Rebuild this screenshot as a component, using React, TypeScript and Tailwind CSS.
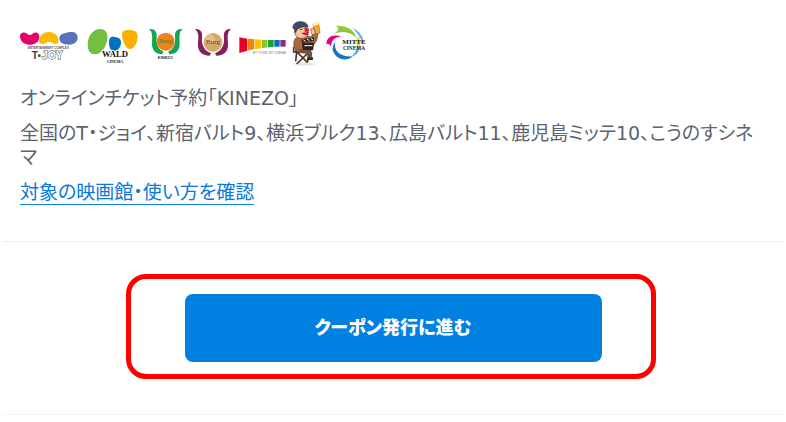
function TJoyLogo() {
  return (
    <svg role="img" aria-label="T-JOY" viewBox="0 0 186 138" className="h-[46px] w-[62px]">
      <path d="M0 49C0 38 12 34 21 41C27 47 32 46 38 41C46 34 58 38 58 50C58 66 44 74 28 74C12 74 0 64 0 49Z" fill="#e5006a" />
      <path d="M58 62C60 46 70 36 87 36C104 36 115 48 116 62C116 72 104 74 98 69C91 64 84 64 78 69C70 74 58 72 58 62Z" fill="#fbb800" />
      <path d="M118 55C118 42 132 40 146 37C162 34 173 40 173 53C173 67 160 74 145 74C129 74 118 68 118 55Z" fill="#5874b9" />
      <text x="85" y="86" textAnchor="middle" fontSize="9" fontWeight="700" fill="#555">ENTERTAINMENT COMPLEX</text>
      <text x="35" y="118" fontSize="31" fontWeight="700" fill="#444">T</text>
      <circle cx="58" cy="107" r="4" fill="#444" />
      <text x="66" y="118" fontSize="31" fontWeight="700" fill="#fff" stroke="#777" strokeWidth="4" paintOrder="stroke">JOY</text>
    </svg>
  )
}

function WaldLogo() {
  return (
    <svg role="img" aria-label="WALD CINEMA" viewBox="0 0 168 138" className="h-[46px] w-[56px]">
      <path d="M5 73C5 49 20 27 43 27C59 27 65 39 64 55C62 80 48 103 25 103C11 103 5 90 5 73Z" fill="#72bf44" />
      <path d="M69 67C69 53 76 49 86 51C98 53 105 56 105 67C105 82 96 93 84 93C73 93 69 80 69 67Z" fill="#0071c1" />
      <path d="M108 43C108 31 120 29 134 30C149 31 156 38 155 52C154 70 144 88 131 87C118 86 108 60 108 43Z" fill="#fbb000" />
      <text x="87" y="110" textAnchor="middle" fontFamily="Liberation Serif, serif" fontSize="26" fontWeight="700" fill="#111" stroke="#fff" strokeWidth="4" paintOrder="stroke">WALD</text>
      <text x="87" y="128" textAnchor="middle" fontFamily="Liberation Serif, serif" fontSize="12" fontWeight="700" fill="#222">CINEMA</text>
    </svg>
  )
}

function ShinjukuLogo() {
  return (
    <svg role="img" aria-label="Burg 13" viewBox="0 0 126 138" className="h-[46px] w-[42px]">
      <path d="M9 27C26 25 33 34 32 50C30 72 36 88 52 94L49 103C28 102 17 90 18 68C19 48 20 37 9 27Z" fill="#14a551" />
      <path d="M110 27C93 25 86 34 87 50C89 72 83 88 67 94L70 103C91 102 102 90 101 68C100 48 99 37 110 27Z" fill="#14a551" />
      <circle cx="59" cy="65" r="27" fill="#f08219" />
      <text x="59" y="70" textAnchor="middle" fontFamily="Liberation Serif, serif" fontSize="21" fill="#5d7a1d">Burg</text>
      <text x="58" y="116" textAnchor="middle" fontSize="12" fontWeight="700" fill="#333" stroke="#fff" strokeWidth="3" paintOrder="stroke">KINEZO</text>
    </svg>
  )
}

function BurgLogo() {
  return (
    <svg role="img" aria-label="Burg" viewBox="0 0 129 138" className="h-[46px] w-[43px]">
      <path d="M9 27C26 25 32 36 30 54C28 76 39 93 57 100L53 107C28 107 16 92 18 68C20 48 20 37 9 27Z" fill="#832060" />
      <path d="M117 27C100 25 94 36 96 54C98 76 87 93 69 100L73 107C98 107 110 92 108 68C106 48 106 37 117 27Z" fill="#832060" />
      <circle cx="63" cy="67" r="28" fill="#d3aa68" />
      <circle cx="54" cy="57" r="14" fill="#e9cb96" opacity=".7" />
      <text x="63" y="73" textAnchor="middle" fontFamily="Liberation Serif, serif" fontSize="21" fill="#832060">Burg</text>
    </svg>
  )
}

function RainbowLogo() {
  return (
    <svg role="img" aria-label="T-JOY CINEMA" viewBox="0 0 144 138" className="h-[46px] w-[48px]">
      <path d="M1 52L25 56V92L1 99Z" fill="#e60027" />
      <path d="M27 56L46 58V88L27 91Z" fill="#f08300" />
      <path d="M48 58L66 59V85L48 88Z" fill="#f7c600" />
      <path d="M68 59L85 60V82L68 85Z" fill="#8bc327" />
      <path d="M87 60H104V81L87 82Z" fill="#16a33a" />
      <path d="M106 60H122V80H106Z" fill="#0070b8" />
      <path d="M124 60H140V80H124Z" fill="#81308c" />
      <text x="91" y="101" textAnchor="middle" fontSize="9" fill="#777">MY TOWN, MY CINEMA</text>
    </svg>
  )
}

function DirectorLogo() {
  return (
    <svg role="img" aria-label="こうのすシネマ" viewBox="0 0 90 138" className="h-[46px] w-[30px]">
      <ellipse cx="40" cy="132" rx="31" ry="5" fill="#eee5d2" />
      <path d="M13 91L50 128M56 94L17 132M8 80V96H58V84M17 96L14 124M53 96L50 126" stroke="#49372b" strokeWidth="5" fill="none" />
      <path d="M12 57C21 46 42 48 61 50L70 34L81 39C80 60 72 74 59 80L55 91H16C8 82 6 68 12 57Z" fill="#a9683c" stroke="#563923" strokeWidth="2" />
      <path d="M12 29C13 17 42 13 52 27C59 43 46 56 29 55C16 54 9 43 12 29Z" fill="#f5c49e" stroke="#5c4231" strokeWidth="2" />
      <path d="M6 25C4 13 15 5 27 5C42 4 51 13 51 21C36 18 25 22 16 31Z" fill="#3d4c66" stroke="#252c3b" strokeWidth="2" />
      <path d="M11 28L18 23L16 37L10 39Z" fill="#49372b" />
      <path d="M38 39L58 31L54 42Z" fill="#fff" />
      <circle cx="47" cy="30" r="7" fill="#dc2737" />
      <path d="M30 39L54 35L50 47L39 44Z" fill="#d31b2b" />
      <path d="M27 29L34 27M40 25L44 24" stroke="#333" strokeWidth="3" />
      <path d="M66 12L83 8L87 39L70 42Z" fill="#f2aa2a" stroke="#a76b16" strokeWidth="2" />
      <path d="M64 11L84 5L87 13L67 18Z" fill="#fff0c2" />
      <path d="M59 27L70 25L73 43L63 44Z" fill="#f5c49e" stroke="#754b32" strokeWidth="2" />
      <path d="M31 59L68 52L70 62L33 68Z" fill="#292421" />
      <path d="M33 68H70L66 91H35Z" fill="#292421" />
      <path d="M37 60L44 64M48 57L55 62M59 55L66 60M40 77H64" stroke="#fff" strokeWidth="3" />
      <path d="M21 88L55 91L64 98L62 113L51 116L50 102L26 99Z" fill="#76513a" />
      <path d="M50 113L65 111L67 119L49 121Z" fill="#302620" />
    </svg>
  )
}

function MitteLogo() {
  return (
    <svg role="img" aria-label="MITTE CINEMA" viewBox="0 0 129 138" className="h-[46px] w-[43px]">
      <path d="M32 17C63 16 88 27 94 54C78 35 49 30 26 43C38 33 47 25 32 17Z" fill="#8bc936" />
      <path d="M4 73C5 49 25 42 50 50C29 49 20 60 18 79C12 71 8 70 4 73Z" fill="#e5007f" />
      <path d="M31 65C24 91 46 112 83 109C66 126 34 119 26 97C20 87 24 75 31 65Z" fill="#1476bd" />
      <path d="M79 110C93 97 100 80 98 61C110 80 104 105 79 110Z" fill="#54b6df" />
      <path d="M82 24C104 33 117 51 116 73C108 57 98 39 82 24Z" fill="#66b8e4" />
      <path d="M94 54L105 49L103 61L116 68L104 69L101 80L95 70L85 68L96 62Z" fill="#f5d646" />
      <text x="87" y="71" textAnchor="middle" fontFamily="Liberation Serif, serif" fontSize="21" fontWeight="700" fill="#222">MITTE</text>
      <text x="87" y="91" textAnchor="middle" fontFamily="Liberation Serif, serif" fontSize="16" fontWeight="700" fill="#222">CINEMA</text>
    </svg>
  )
}

export default function App() {
  return (
    <main className="min-h-screen bg-white px-[3px] font-['DejaVu_Sans','Noto_Sans_CJK_JP',sans-serif] leading-6 text-[#5b636e]">
      <section className="border-b border-[#eeeeee] px-[17px] pt-5 pb-9">
        <div className="mb-5 flex gap-1 font-['Liberation_Sans',sans-serif]">
          <TJoyLogo />
          <WaldLogo />
          <ShinjukuLogo />
          <BurgLogo />
          <RainbowLogo />
          <DirectorLogo />
          <MitteLogo />
        </div>
        <div className="flex flex-col items-start gap-[11px] text-[19px] [font-feature-settings:'palt']">
          <p>オンラインチケット予約「KINEZO」</p>
          <p>全国のT・ジョイ、新宿バルト9、横浜ブルク13、広島バルト11、鹿児島ミッテ10、こうのすシネマ</p>
          <a href="#theaters" className="border-b border-[#1683e2] text-[#0878dc]">
            対象の映画館・使い方を確認
          </a>
        </div>
      </section>

      <section className="border-b border-[#f2f2f2] px-5 py-[52px]">
        <div className="relative mx-auto max-w-[417px]">
          <button type="button" className="h-[68px] w-full rounded-lg bg-[#0080e0] text-[18px] font-black text-white [font-feature-settings:'palt']">
            クーポン発行に進む
          </button>
          <div className="pointer-events-none absolute -top-5 -right-[54px] -bottom-[17px] -left-[59px] rounded-[20px] border-5 border-[#ff0000]" />
        </div>
      </section>
    </main>
  )
}
